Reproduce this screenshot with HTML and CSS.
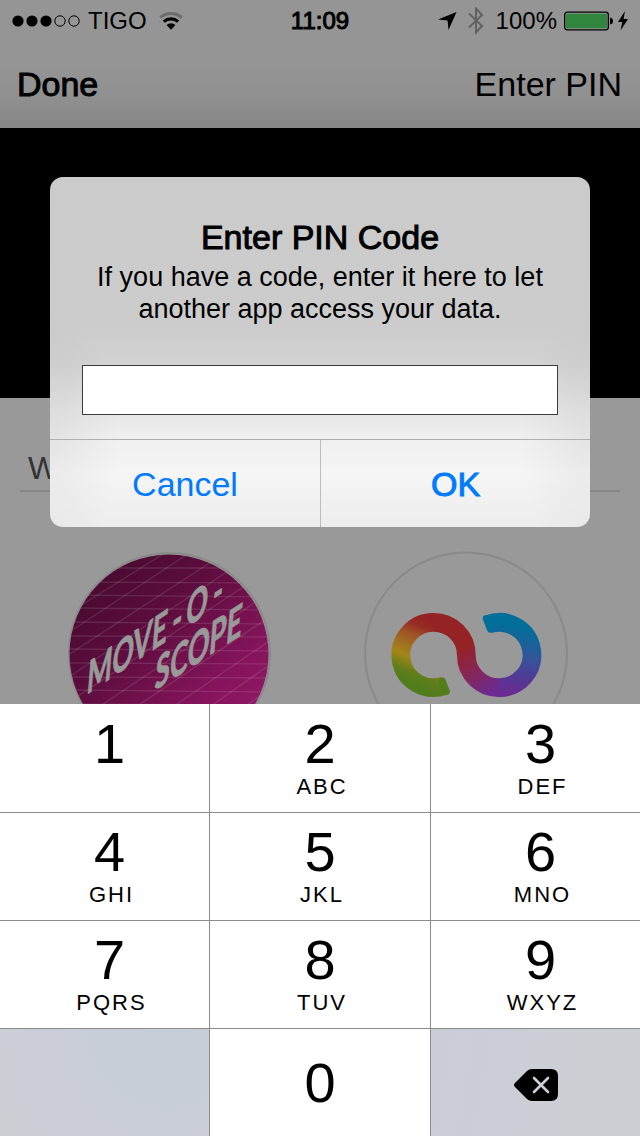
FILE: index.html
```html
<!DOCTYPE html>
<html lang="en">
<head>
<meta charset="utf-8">
<meta name="viewport" content="width=device-width, initial-scale=1">
<title>Enter PIN</title>
<link rel="stylesheet" href="styles.css">
</head>
<body>
<header class="top">
  <div class="status">
    <div class="status-left">
      <svg class="signal" width="70" height="14" viewBox="0 0 70 14" aria-hidden="true">
        <g fill="#000"><circle cx="6" cy="7" r="5.6"/><circle cx="20" cy="7" r="5.6"/><circle cx="34" cy="7" r="5.6"/></g>
        <g fill="none" stroke="#000"><circle cx="48" cy="7" r="5.2"/><circle cx="62" cy="7" r="5.2"/></g>
      </svg>
      <span>TIGO</span>
      <svg class="wifi" width="26" height="20" viewBox="0 0 26 20" aria-hidden="true">
        <g fill="none" stroke-width="3">
          <path d="M1.2 6.500A16.500 16.500 0 0 1 22.800 6.500" stroke="#6c6c6c"/>
          <path d="M4.800 10.600A11 11 0 0 1 19.200 10.600" stroke="#000" stroke-width="3.200"/>
        </g>
        <path d="M7.600 14A6.600 6.600 0 0 1 16.400 14L12 18.800Z" fill="#000"/>
      </svg>
    </div>
    <time class="clock">11:09</time>
    <div class="status-right">
      <svg width="22" height="22" viewBox="0 0 22 22" aria-hidden="true"><path d="M18.500 2L10.500 20L9.600 10.600L0 9.600Z" fill="#000"/></svg>
      <svg width="22" height="28" viewBox="0 0 22 28" aria-hidden="true"><path d="M2 6.500L15 19L9 25.500V1.500L15 8L2 20.500" fill="none" stroke="#626262" stroke-width="2"/></svg>
      <span>100%</span>
      <svg width="64" height="22" viewBox="0 0 64 22" aria-hidden="true">
        <rect x=".7" y="2.200" width="43.600" height="17.600" rx="2.500" fill="none" stroke="#000" stroke-width="1.300"/>
        <rect x="2" y="3.700" width="41" height="14.600" rx="1" fill="#30853f"/>
        <path d="M46 7.500Q49 8 49 11T46 14.500Z" fill="#000"/>
        <path d="M61 1L54 12H58.300L56.500 20.500L64 9H59.600Z" fill="#000"/>
      </svg>
    </div>
  </div>
  <nav class="nav">
    <button class="nav-done medium" type="button">Done</button>
    <button type="button">Enter PIN</button>
  </nav>
</header>

<main class="page">
  <div class="hero"></div>
  <section class="apps">
    <h2 class="apps-title">W</h2>
    <div class="app-list">
      <svg width="204" height="204" viewBox="0 0 204 204" role="img" aria-label="Move-O-Scope">
        <defs>
          <linearGradient id="plum" x1=".15" y1=".1" x2=".85" y2=".85">
            <stop offset="0" stop-color="#480a2f"/><stop offset=".35" stop-color="#5c0d3d"/><stop offset=".8" stop-color="#86145c"/><stop offset="1" stop-color="#8e1765"/>
          </linearGradient>
          <clipPath id="disc"><circle cx="101" cy="103" r="99.500"/></clipPath>
        </defs>
        <circle cx="101.500" cy="102.500" r="100.500" fill="none" stroke="#8a8a8a" stroke-width="2"/>
        <g clip-path="url(#disc)">
          <rect width="204" height="204" fill="url(#plum)"/>
          <path d="M0 17H204M0 31L204 32M0 44L204 46M0 57L204 59M0 71L204 73M0 85L204 86M0 98L204 100M0 112L204 113M0 126L204 127M0 139L204 141M0 153L204 154" stroke="#fff" stroke-opacity=".11" stroke-width="1.300" fill="none"/>
          <path d="M-20 75L100 0M-20 95L132 -5M-20 117L160 0M-20 140L190 0M-20 165L210 13M-20 190L210 36M0 202L210 60M20 214L210 84M50 220L210 108M80 225L210 132" stroke="#fff" stroke-opacity=".11" stroke-width="1.300" fill="none"/>
          <g class="scope-text">
            <text transform="matrix(.58 -.39 -.08 1 18 144)" font-size="46">MOVE<tspan dx="9">-</tspan><tspan dx="7">O</tspan><tspan dx="9">-</tspan></text>
            <text transform="matrix(.59 -.38 -.08 1 86 140)" font-size="46">SCOPE</text>
          </g>
        </g>
      </svg>
      <svg width="204" height="204" viewBox="0 0 204 204" role="img" aria-label="Rainbow loop">
        <defs>
          <linearGradient id="warm" gradientUnits="userSpaceOnUse" x1="46" y1="132" x2="71" y2="70">
            <stop offset="0" stop-color="#537d1b"/><stop offset=".15" stop-color="#5f7d1b"/><stop offset=".36" stop-color="#a28617"/><stop offset=".5" stop-color="#a07320"/><stop offset=".7" stop-color="#9e5226"/><stop offset=".85" stop-color="#962b24"/><stop offset="1" stop-color="#952225"/>
          </linearGradient>
          <linearGradient id="bridge" gradientUnits="userSpaceOnUse" x1="98" y1="98" x2="128" y2="141">
            <stop offset="0" stop-color="#952225"/><stop offset=".45" stop-color="#882653"/><stop offset="1" stop-color="#6c2a91"/>
          </linearGradient>
          <linearGradient id="cool" gradientUnits="userSpaceOnUse" x1="135" y1="142" x2="150" y2="74">
            <stop offset="0" stop-color="#6c2a91"/><stop offset=".3" stop-color="#503a96"/><stop offset=".6" stop-color="#32569a"/><stop offset="1" stop-color="#006e98"/>
          </linearGradient>
        </defs>
        <circle cx="102" cy="102.500" r="101" fill="none" stroke="#8a8a8a" stroke-width="2"/>
        <g fill="none" stroke-width="18.700">
          <path d="M80.300 134.700A32.600 32.600 0 1 1 70.500 71.400" stroke="url(#warm)"/>
          <path d="M69.700 71.400A32.600 32.600 0 0 1 102.300 104A32.600 32.600 0 0 0 136 136.600" stroke="url(#bridge)"/>
          <path d="M135 136.600A32.600 32.600 0 1 0 124.400 73.300" stroke="url(#cool)"/>
        </g>
        <g stroke-width="7" stroke-linecap="round">
          <path d="M78.300 130L82.300 140.600" stroke="#537d1b"/>
          <path d="M126.400 78.200L122.300 67.500" stroke="#006e98"/>
        </g>
      </svg>
    </div>
  </section>
</main>

<section class="keypad" aria-label="Number pad">
  <button class="key side" type="button"><span class="digit">1</span><span class="letters"></span></button>
  <button class="key" type="button"><span class="digit">2</span><span class="letters">ABC</span></button>
  <button class="key side" type="button"><span class="digit">3</span><span class="letters">DEF</span></button>
  <button class="key side" type="button"><span class="digit">4</span><span class="letters">GHI</span></button>
  <button class="key" type="button"><span class="digit">5</span><span class="letters">JKL</span></button>
  <button class="key side" type="button"><span class="digit">6</span><span class="letters">MNO</span></button>
  <button class="key side" type="button"><span class="digit">7</span><span class="letters">PQRS</span></button>
  <button class="key" type="button"><span class="digit">8</span><span class="letters">TUV</span></button>
  <button class="key side" type="button"><span class="digit">9</span><span class="letters">WXYZ</span></button>
  <div class="blank"></div>
  <button class="key zero" type="button"><span class="digit">0</span></button>
  <button class="key erase" type="button" aria-label="Delete">
    <svg width="44" height="32" viewBox="0 0 44 32" aria-hidden="true">
      <path d="M18 0H37Q44 0 44 7V25Q44 32 37 32H18Q15 32 13 30L1 18Q-1 16 1 14L13 2Q15 0 18 0Z" fill="#000"/>
      <path d="M20 9L34 23M34 9L20 23" stroke="#cdd0d6" stroke-width="2.600" stroke-linecap="round"/>
    </svg>
  </button>
</section>

<form class="dialog" role="dialog" aria-labelledby="dialog-title">
  <div class="dialog-body">
    <h1 class="dialog-title medium" id="dialog-title">Enter PIN Code</h1>
    <label class="message" for="pin">If you have a code, enter it here to let another app access your data.</label>
    <input class="pin" id="pin" type="text" inputmode="numeric">
  </div>
  <div class="actions">
    <button type="button">Cancel</button>
    <button class="medium" type="submit">OK</button>
  </div>
</form>
</body>
</html>
```
FILE: styles.css
```css
* { box-sizing: border-box; }

body {
  margin: 0;
  min-height: 100vh;
  display: flex;
  flex-direction: column;
  position: relative;
  background: #999;
  color: #000;
  font-family: "Liberation Sans", Arial, sans-serif;
}

button {
  margin: 0;
  padding: 0;
  border: 0;
  background: none;
  color: inherit;
  font: inherit;
}

svg { display: block; flex: none; }

/* Medium weight, between regular and bold */
.medium { -webkit-text-stroke: 1px currentColor; }

.top { background: linear-gradient(#959595 0, #959595 50%, #909090 75%, #868686 100%); }

.status {
  display: grid;
  grid-template-columns: 1fr auto 1fr;
  align-items: center;
  height: 42px;
  padding: 0 12px;
  font-size: 24px;
}

.status-left, .status-right { display: flex; align-items: center; }
.status-left { gap: 6px; }
.status-right { gap: 7px; justify-content: flex-end; }
.wifi { margin-left: 6px; }
.clock { -webkit-text-stroke: 1px currentColor; }

.nav {
  display: flex;
  justify-content: space-between;
  align-items: center;
  height: 86px;
  padding: 0 18px 2px 17px;
  font-size: 34px;
}

.page {
  flex: 1 0 0;
  display: flex;
  flex-direction: column;
  min-height: 576px;
  overflow: hidden;
}

.hero { flex: none; height: 270px; background: #000; }

.apps { flex: 1 1 0; min-height: 0; padding: 0 20px; overflow: hidden; }

.apps-title {
  margin: 0;
  padding: 50px 8px 2px;
  border-bottom: 2px solid #868686;
  color: #333;
  font-size: 32px;
  font-weight: 400;
  line-height: 40px;
}

.app-list {
  display: flex;
  justify-content: center;
  gap: 92px;
  padding: 59px 4px 0 0;
}

.scope-text {
  fill: #999;
  stroke: #999;
  stroke-width: 1px;
  font-family: Lato, sans-serif;
  font-weight: 700;
}

.keypad {
  display: grid;
  grid-template-columns: 209fr 220fr 209fr;
  grid-template-rows: 108px repeat(3, 107px);
  gap: 1px;
  background: #8c8c8f;
}

.key {
  display: flex;
  flex-direction: column;
  align-items: center;
  justify-content: flex-end;
  padding-bottom: 12px;
  background: #fff;
}

.side { padding-left: 10px; }
.zero { justify-content: center; padding-bottom: 0; }
.digit { font-size: 56px; line-height: 60px; }
.letters { min-height: 26px; padding-left: 4px; font-size: 22px; line-height: 26px; letter-spacing: 2px; }
.blank { background: radial-gradient(circle at 80% 0, #c6ced6 0, #c8ced7 35%, #cbced8 60%, #ccd0d4 100%); }
.erase { justify-content: center; padding: 5px 0 0; background: linear-gradient(100deg, #cbccd7, #cccfd6 50%, #ccd0d4 75%); }

.dialog {
  position: absolute;
  top: 177px;
  left: 50px;
  right: 50px;
  overflow: hidden;
  border-radius: 13px;
  background:
    radial-gradient(ellipse 70px 130px at 0 75%, rgba(0, 0, 0, .05), transparent),
    radial-gradient(ellipse 70px 130px at 100% 75%, rgba(0, 0, 0, .05), transparent),
    linear-gradient(#cbcbcb 0, #cccccc 43%, #d2d2d2 53%, #e5e5e5 66%, #f0f0f0 75%, #f5f5f5 85%, #ededed 100%);
}

.dialog-body {
  display: flex;
  flex-direction: column;
  padding: 40px 30px 24px;
  text-align: center;
}

.dialog-title {
  margin: 0;
  font-size: 34px;
  font-weight: 400;
  line-height: 40px;
}

.message { padding-top: 4px; font-size: 27px; line-height: 32px; }

.pin {
  height: 50px;
  margin: 40px 2px 0;
  padding: 0 10px;
  border: 1px solid #3c3c3f;
  border-radius: 0;
  outline: 0;
  background: #fff;
  font: inherit;
  font-size: 26px;
}

.actions {
  display: grid;
  grid-template-columns: 1fr 1fr;
  height: 88px;
  border-top: 1px solid #b0b0b2;
  color: #007aff;
  font-size: 34px;
}

.actions button { padding-top: 2px; }
.actions button + button { border-left: 1px solid #bcbcbe; }
```
